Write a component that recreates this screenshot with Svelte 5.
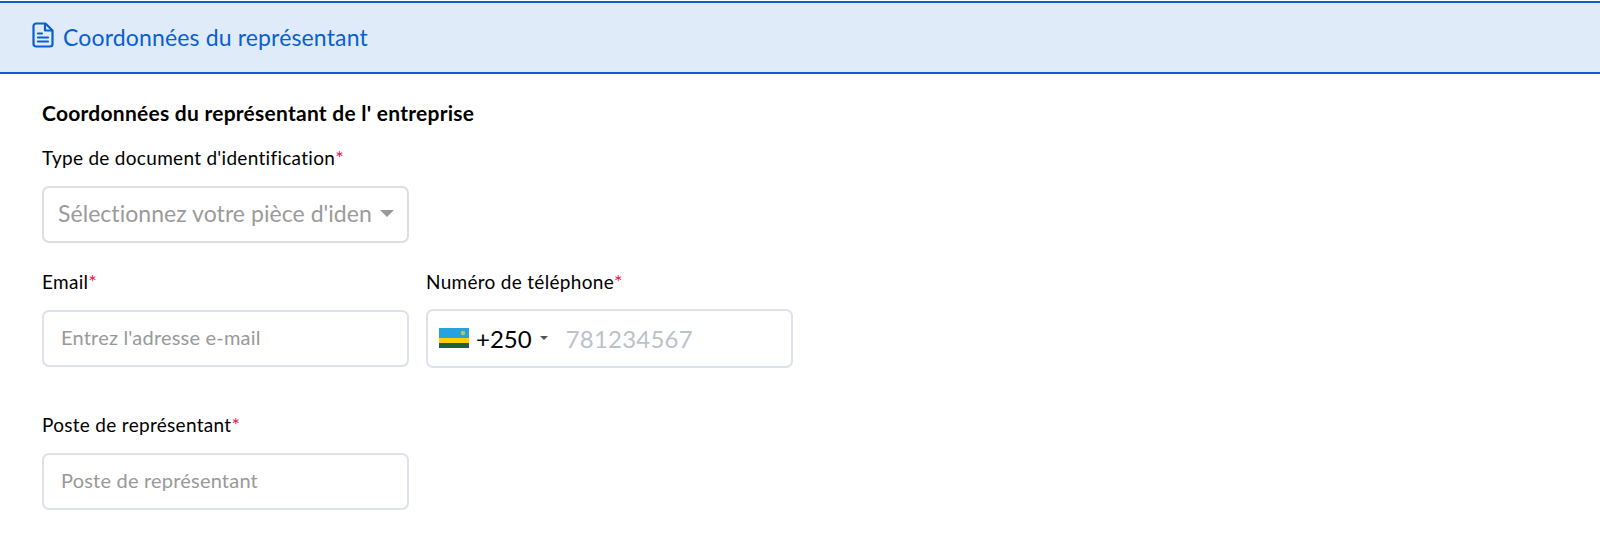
<script>
	const rowOne = { label: "Email", placeholder: "Entrez l'adresse e-mail" };
	const poste = { label: "Poste de représentant", placeholder: "Poste de représentant" };
</script>

<section class="panel">
	<header class="panel-head">
		<svg class="doc-icon" width="22" height="26" viewBox="0 0 22 26" fill="none" stroke="#0a5fd3" stroke-width="2.2" stroke-linejoin="round" stroke-linecap="round">
			<path d="M4 1.5h9.5l7 7V22a2.5 2.5 0 0 1-2.5 2.5H4A2.5 2.5 0 0 1 1.5 22V4A2.5 2.5 0 0 1 4 1.5z" />
			<path d="M13 2v6.5h7" />
			<path d="M6 11.5h4M6 15.5h10M6 19.5h10" />
		</svg>
		<h2>Coordonnées du représentant</h2>
	</header>

	<div class="panel-body">
		<h3>Coordonnées du représentant de l' entreprise</h3>

		<div class="field first">
			<span class="label">Type de document d'identification<em>*</em></span>
			<div class="control select">
				<span class="select-text">Sélectionnez votre pièce d'iden</span>
				<span class="caret"></span>
			</div>
		</div>

		<div class="row">
			<div class="field">
				<span class="label">{rowOne.label}<em>*</em></span>
				<div class="control input">{rowOne.placeholder}</div>
			</div>
			<div class="field">
				<span class="label">Numéro de téléphone<em>*</em></span>
				<div class="control phone">
					<svg class="flag" width="30" height="20" viewBox="0 0 30 20">
						<rect width="30" height="10" fill="#27a2e0" />
						<rect y="10" width="30" height="5" fill="#fad201" />
						<rect y="15" width="30" height="5" fill="#20603d" />
						<circle cx="24" cy="5" r="2.2" fill="#b5c94a" />
					</svg>
					<span class="dial">+250</span>
					<span class="caret small"></span>
					<span class="phone-hint">781234567</span>
				</div>
			</div>
		</div>

		<div class="field last">
			<span class="label">{poste.label}<em>*</em></span>
			<div class="control input">{poste.placeholder}</div>
		</div>
	</div>
</section>

<style>
	:global(body) {
		margin: 0;
		background: #fff;
		font-family: Lato, "Open Sans", sans-serif;
	}

	.panel-head {
		display: flex;
		align-items: center;
		gap: 9px;
		height: 69px;
		margin-top: 1px;
		padding-left: 32px;
		background: #dfebf8;
		border-top: 2px solid #0a5fd3;
		border-bottom: 2px solid #0a5fd3;
	}
	.doc-icon {
		margin-bottom: 5px;
	}
	.panel-head h2 {
		margin: 0 0 2px;
		font-size: 23px;
		font-weight: 400;
		letter-spacing: 0.15px;
		color: #0a5fd3;
	}

	.panel-body {
		padding: 27px 0 0 42px;
	}
	h3 {
		margin: 0;
		font-size: 21px;
		line-height: 24px;
		font-weight: 700;
		letter-spacing: 0.25px;
		color: #000;
	}

	.row {
		display: flex;
		gap: 17px;
		margin-top: 27px;
	}
	.field.first {
		margin-top: 21px;
	}
	.field.last {
		margin-top: 45px;
	}
	.field {
		width: 367px;
	}

	.label {
		display: block;
		font-size: 19px;
		line-height: 24px;
		letter-spacing: 0.3px;
		color: #000;
	}
	.label em {
		font-style: normal;
		font-size: 20px;
		line-height: 20px;
		color: #f5114a;
	}

	.control {
		box-sizing: border-box;
		display: flex;
		align-items: center;
		width: 367px;
		height: 57px;
		margin-top: 16px;
		padding-bottom: 3px;
		background: #fff;
		border: 2px solid #dce1ea;
		border-radius: 7px;
	}
	.select {
		border-color: #dedede;
		padding: 0 13px 3px 14px;
		justify-content: space-between;
		font-size: 23px;
		letter-spacing: 0.05px;
		color: #9b9b9b;
	}
	.select-text {
		white-space: nowrap;
	}
	.caret {
		width: 0;
		height: 0;
		border-left: 7px solid transparent;
		border-right: 7px solid transparent;
		border-top: 7px solid #999;
	}
	.caret.small {
		margin-left: 8px;
		border-left-width: 4px;
		border-right-width: 4px;
		border-top: 4px solid #555;
	}
	.input {
		padding-left: 17px;
		font-size: 20px;
		letter-spacing: 0.2px;
		color: #999;
	}
	.phone {
		padding-left: 11px;
		padding-bottom: 1px;
		margin-top: 15px;
		height: 59px;
	}
	.flag {
		flex: none;
	}
	.dial {
		margin-left: 7px;
		font-size: 24px;
		color: #000;
	}
	.phone-hint {
		margin-left: 18px;
		font-size: 24px;
		letter-spacing: 0.2px;
		color: #bcc2ca;
	}
</style>
